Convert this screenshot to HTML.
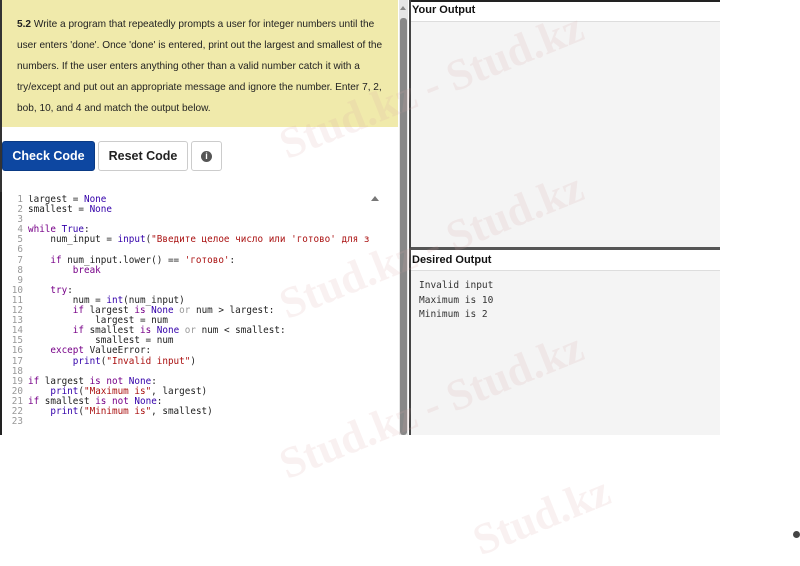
<!DOCTYPE html>
<html><head><meta charset="utf-8"><style>
body{margin:0;width:800px;height:538px;background:#fff;position:relative;overflow:hidden;font-family:"Liberation Sans",Arial,sans-serif}
.abs{position:absolute}
.yel{left:0;top:0;width:398px;height:127px;background:#f0eaab;border-left:2px solid #333;box-sizing:border-box;font-size:10.1px;color:#222;line-height:21px;padding:14px 0 0 15px}
.btn{top:141px;height:30px;box-sizing:border-box;font-weight:bold;font-size:12.5px;line-height:28px;text-align:center;border-radius:3px}
.code{left:0;top:192px;width:380px;height:243px;border-left:2px solid #222;font-family:"DejaVu Sans Mono","Liberation Mono",monospace;font-size:9.3px;line-height:10.1px;color:#222}
.ln{position:absolute;left:2px;top:3px;width:19px;text-align:right;color:#999;white-space:pre}
.src{position:absolute;left:26px;top:3px;white-space:pre;width:342px;overflow:hidden}
.k{color:#708}.n{color:#30a}.s{color:#a11}.o{color:#999}
.hd{font-weight:bold;font-size:11px;color:#111}
.out{background:#f4f4f4}
.wm{position:absolute;font-family:"Liberation Serif",serif;font-weight:bold;font-size:44px;color:rgba(220,170,170,0.16);transform:rotate(-22deg);white-space:nowrap}
</style></head><body>
<div class="abs yel"><b>5.2</b> Write a program that repeatedly prompts a user for integer numbers until the<br>user enters 'done'. Once 'done' is entered, print out the largest and smallest of the<br>numbers. If the user enters anything other than a valid number catch it with a<br>try/except and put out an appropriate message and ignore the number. Enter 7, 2,<br>bob, 10, and 4 and match the output below.</div>
<div class="abs" style="left:0;top:127px;width:2px;height:308px;background:#333"></div>
<div class="abs btn" style="left:2px;width:93px;background:#0d47a1;color:#fff;border:1px solid #0a3a85">Check Code</div>
<div class="abs btn" style="left:98px;width:90px;background:#fff;color:#222;border:1px solid #ccc">Reset Code</div>
<div class="abs btn" style="left:191px;width:31px;background:#fff;border:1px solid #ccc"><span style="display:inline-block;width:11px;height:11px;border-radius:50%;background:#555;color:#fff;font-size:9px;line-height:11px;vertical-align:middle">i</span></div>
<div class="abs code">
<div class="ln">1
2
3
4
5
6
7
8
9
10
11
12
13
14
15
16
17
18
19
20
21
22
23</div>
<div class="src">largest = <span class="n">None</span>
smallest = <span class="n">None</span>

<span class="k">while</span> <span class="n">True</span>:
    num_input = <span class="n">input</span>(<span class="s">"Введите целое число или 'готово' для завершения: "</span>)

    <span class="k">if</span> num_input.lower() == <span class="s">'готово'</span>:
        <span class="k">break</span>

    <span class="k">try</span>:
        num = <span class="n">int</span>(num_input)
        <span class="k">if</span> largest <span class="k">is</span> <span class="n">None</span> <span class="o">or</span> num &gt; largest:
            largest = num
        <span class="k">if</span> smallest <span class="k">is</span> <span class="n">None</span> <span class="o">or</span> num &lt; smallest:
            smallest = num
    <span class="k">except</span> ValueError:
        <span class="n">print</span>(<span class="s">"Invalid input"</span>)

<span class="k">if</span> largest <span class="k">is</span> <span class="k">not</span> <span class="n">None</span>:
    <span class="n">print</span>(<span class="s">"Maximum is"</span>, largest)
<span class="k">if</span> smallest <span class="k">is</span> <span class="k">not</span> <span class="n">None</span>:
    <span class="n">print</span>(<span class="s">"Minimum is"</span>, smallest)
</div>
<div class="abs" style="left:369px;top:4px;width:0;height:0;border-left:4px solid transparent;border-right:4px solid transparent;border-bottom:5px solid #777"></div>
</div>
<div class="abs" style="left:399px;top:0;width:9px;height:435px;background:#e6e6e6"></div>
<div class="abs" style="left:400px;top:6px;width:0;height:0;border-left:3.5px solid transparent;border-right:3.5px solid transparent;border-bottom:4px solid #888"></div>
<div class="abs" style="left:400px;top:18px;width:7px;height:417px;background:#888;border-radius:3px"></div>
<div class="abs" style="left:409px;top:0;width:2px;height:435px;background:#444"></div>
<div class="abs" style="left:411px;top:0;width:309px;height:2px;background:#222"></div>
<div class="abs hd" style="left:412px;top:4px">Your Output</div>
<div class="abs out" style="left:411px;top:21px;width:309px;height:226px;border-top:1px solid #ddd"></div>
<div class="abs" style="left:411px;top:247px;width:309px;height:3px;background:#555"></div>
<div class="abs hd" style="left:412px;top:254px">Desired Output</div>
<div class="abs out" style="left:411px;top:270px;width:309px;height:165px;border-top:1px solid #ddd;font-family:'DejaVu Sans Mono',monospace;font-size:9.5px;line-height:14.5px;color:#333;white-space:pre;padding:8px 0 0 8px;box-sizing:border-box">Invalid input
Maximum is 10
Minimum is 2</div>
<div class="wm" style="left:270px;top:60px">Stud.kz - Stud.kz</div>
<div class="wm" style="left:270px;top:220px">Stud.kz - Stud.kz</div>
<div class="wm" style="left:270px;top:380px">Stud.kz - Stud.kz</div>
<div class="wm" style="left:470px;top:490px">Stud.kz</div>
<div class="abs" style="left:793px;top:531px;width:7px;height:7px;border-radius:50%;background:#444"></div>
</body></html>
